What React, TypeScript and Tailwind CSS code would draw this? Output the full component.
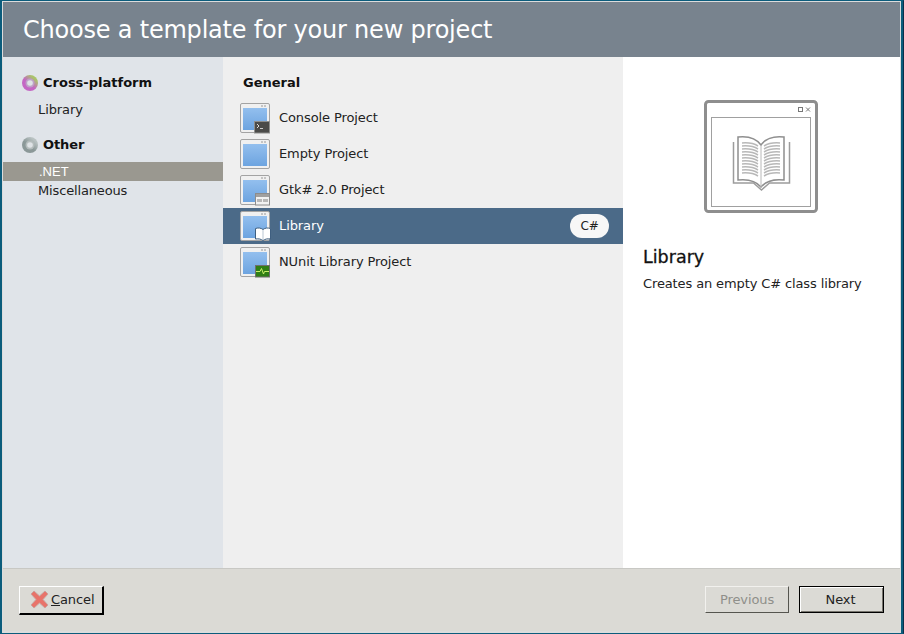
import React from 'react';

const font = { fontFamily: '"DejaVu Sans", sans-serif' };

const TemplateIcon = ({ badge }: { badge?: React.ReactNode }) => (
  <svg width="32" height="32" viewBox="0 0 32 32" className="shrink-0">
    <defs>
      <linearGradient id="paneBlue" x1="0" y1="0" x2="0" y2="1">
        <stop offset="0" stopColor="#93bfee" />
        <stop offset="1" stopColor="#6da4e0" />
      </linearGradient>
    </defs>
    <g transform="translate(0,1)">
      <rect x="0.5" y="0.5" width="29" height="29" rx="1.5" fill="#f0f0f0" stroke="#a3a3a3" />
      <rect x="21" y="2" width="2" height="2" fill="#c4c4c4" />
      <rect x="24" y="2" width="2" height="2" fill="#c4c4c4" />
      <rect x="3" y="5" width="24" height="22" fill="url(#paneBlue)" />
      {badge}
    </g>
  </svg>
);

const ConsoleBadge = (
  <g>
    <rect x="14.5" y="18.5" width="15" height="11.5" fill="#4b4b49" stroke="#8f8f8d" />
    <path d="M17 21l2 2-2 2" fill="none" stroke="#dddddd" />
    <path d="M20 25.500h3" stroke="#cccccc" />
  </g>
);

const GtkBadge = (
  <g>
    <rect x="15.5" y="18.5" width="14" height="11.5" fill="#f2f2f2" stroke="#8c8c8c" />
    <rect x="16" y="19" width="13" height="3" fill="#a0a0a0" />
    <rect x="17" y="24" width="5" height="3" fill="#b8b8b8" />
    <rect x="23" y="24" width="5" height="3" fill="#b8b8b8" />
  </g>
);

const BookBadge = (
  <g>
    <path d="M15.500 17.500c3-1 5.500-.5 7.500 1 2-1.500 4.500-2 7.500-1V28c-3-.5-5.500 0-7.500 1.500-2-1.500-4.500-2-7.500-1.500z" fill="#ffffff" stroke="#3f5f80" />
    <path d="M23 19v10" stroke="#b9c6d2" />
  </g>
);

const NunitBadge = (
  <g>
    <rect x="15.5" y="18.5" width="14" height="11.5" fill="#2f7f16" stroke="#6f6f6f" />
    <path d="M16 24.500h4l1.500-3 2 5.500 1-2.500h4.500" fill="none" stroke="#c9f06a" />
  </g>
);

const Ring = ({ id, from, to, inner }: { id: string; from: string; to: string; inner: string }) => (
  <svg width="16" height="16" viewBox="0 0 16 16" className="shrink-0">
    <defs>
      <linearGradient id={id} x1="0.9" y1="0.1" x2="0.2" y2="0.9">
        <stop offset="0.15" stopColor={from} />
        <stop offset="0.6" stopColor={to} />
      </linearGradient>
    </defs>
    <circle cx="8" cy="8" r="8" fill={`url(#${id})`} />
    <circle cx="8" cy="8" r="4.500" fill={inner} />
    <circle cx="8" cy="8" r="2.800" fill="#dfe3e6" />
  </svg>
);

const rows = [
  { label: 'Console Project', badge: ConsoleBadge },
  { label: 'Empty Project' },
  { label: 'Gtk# 2.0 Project', badge: GtkBadge },
  { label: 'Library', badge: BookBadge, selected: true },
  { label: 'NUnit Library Project', badge: NunitBadge },
];

const pageLines = [46, 49, 52, 55, 58, 61, 64, 67, 70, 73, 76];

const BigPreview = () => (
  <svg width="114" height="114" viewBox="0 0 114 114">
    <rect x="1.500" y="1.500" width="111" height="110" rx="3" fill="#ffffff" stroke="#8e8e8e" strokeWidth="3" />
    <rect x="7.500" y="17.500" width="99" height="89" fill="#ffffff" stroke="#a0a0a0" />
    <rect x="94.500" y="7.500" width="4" height="4" fill="none" stroke="#777777" />
    <path d="M102 7.500l4 4M106 7.500l-4 4" stroke="#777777" />
    <path d="M29.500 42v41h20l8 7 8-7h20V42" fill="none" stroke="#9c9c9c" strokeWidth="1.500" />
    <path d="M34 37c9-1 18 1 23 8 5-7 14-9 23-8v43c-9-1-18 1-23 7-5-6-14-8-23-7z" fill="#ffffff" stroke="#8f8f8f" strokeWidth="1.500" />
    <path d="M57 45v42" stroke="#b8b8b8" />
    {pageLines.map((y) => (
      <g key={y}>
        <path d={`M38 ${y - 3}c6-.5 12 .5 16 3`} fill="none" stroke="#b8b8b8" strokeWidth="1.500" />
        <path d={`M76 ${y - 3}c-6-.5-12 .5-16 3`} fill="none" stroke="#b8b8b8" strokeWidth="1.500" />
      </g>
    ))}
  </svg>
);

export default function App() {
  return (
    <div
      className="h-[634px] w-[904px] overflow-hidden border-y border-l-2 border-r border-t-[#0b5c7c] border-b-[#0b5c7c] border-l-[#0b5c7c] border-r-[#0a2f4a] bg-[#0b5c7c] pr-[2px] tracking-[-0.1px]"
      style={font}
    >
      <div className="flex h-full flex-col border border-b-2 border-[#dcdcdc] bg-[#dbdad5]">
        {/* Banner */}
        <div className="flex h-[55px] shrink-0 items-center bg-[#78838e] pl-5 text-[24px] tracking-[-0.21px] text-white">
          Choose a template for your new project
        </div>

        <div className="flex min-h-0 flex-1">
          {/* Categories */}
          <div className="w-[220px] shrink-0 bg-[#e0e4e9] pt-[18px] text-[13px] text-[#222222]">
            <div className="flex h-4 items-center gap-[5px] pl-[19px]">
              <Ring id="ringColor" from="#a9c46a" to="#c467c4" inner="#bfa0c8" />
              <span className="text-[13px] font-bold leading-4 tracking-normal text-[#111111]">Cross-platform</span>
            </div>
            <div className="mt-[11px] pl-[35px] leading-4">Library</div>
            <div className="mt-[19px] flex h-4 items-center gap-[5px] pl-[19px]">
              <Ring id="ringGray" from="#b9c2c2" to="#8b9898" inner="#b4bcbc" />
              <span className="text-[13px] font-bold leading-4 tracking-[-0.1px] text-[#111111]">Other</span>
            </div>
            <div
              className="mt-[9px] flex h-[19px] items-center bg-[#9a9890] pl-[36px] text-[13px] tracking-normal text-white"
              style={{ fontFamily: '"Liberation Sans", sans-serif' }}
            >
              .NET
            </div>
            <div className="flex h-[19px] items-center pl-[35px] tracking-[-0.15px]">Miscellaneous</div>
          </div>

          {/* Templates */}
          <div className="w-[400px] shrink-0 bg-[#efefef] pt-[18px]">
            <div className="pl-5 text-[13px] font-bold leading-4 tracking-normal text-[#111111]">General</div>
            <div className="mt-[9px]">
              {rows.map((row) => (
                <div
                  key={row.label}
                  className={`flex h-9 items-center gap-[7px] pl-[17px] pr-[14px] text-[13px] ${
                    row.selected ? 'bg-[#4b6a88] text-white' : 'text-[#222222]'
                  }`}
                >
                  <TemplateIcon badge={row.badge} />
                  <span className="flex-1">{row.label}</span>
                  {row.selected && (
                    <span className="flex h-6 w-[39px] items-center justify-center rounded-full bg-[#f7f7f7] text-[12px] text-[#222222]">
                      C#
                    </span>
                  )}
                </div>
              ))}
            </div>
          </div>

          {/* Preview */}
          <div className="flex-1 bg-white px-5 pt-[43px]">
            <div className="flex justify-center pr-[2px]">
              <BigPreview />
            </div>
            <div className="mt-[33px] text-[17.5px] leading-5 tracking-normal text-[#111111] [-webkit-text-stroke:0.3px_#111111]">
              Library
            </div>
            <div className="mt-[9px] text-[13px] leading-4 tracking-[-0.12px] text-[#222222]">
              Creates an empty C# class library
            </div>
          </div>
        </div>

        {/* Footer */}
        <div className="flex h-[63px] shrink-0 items-center justify-between border-t border-[#c8c8c4] pl-4 pr-[16px] text-[13px]">
          <button className="flex h-[29px] w-[85px] items-center gap-[2px] border-2 border-l border-t border-white border-b-black border-r-black pl-[10px] text-[#222222]">
            <svg width="19" height="19" viewBox="0 0 19 19">
              <path d="M4 1l5.500 5L15 1l3 3-5 5.500 5 5.500-3 3-5.500-5L4 18l-3-3 5-5.500L1 4z" fill="#e8736a" stroke="#c9a49e" />
            </svg>
            <span>
              <span className="underline">C</span>ancel
            </span>
          </button>
          <div className="mb-[2px] flex gap-[10px]">
            <button className="h-[27px] w-[84px] border border-[#f2f1ee] border-b-[#55554f] border-r-[#55554f] pt-px text-[#8f8f8a]">
              Previous
            </button>
            <button className="h-[27px] w-[85px] border border-black pr-[2px] pt-px text-[#222222] shadow-[inset_1px_1px_0_#ffffff,inset_-1px_-1px_0_#77756e]">
              Next
            </button>
          </div>
        </div>
      </div>
    </div>
  );
}
